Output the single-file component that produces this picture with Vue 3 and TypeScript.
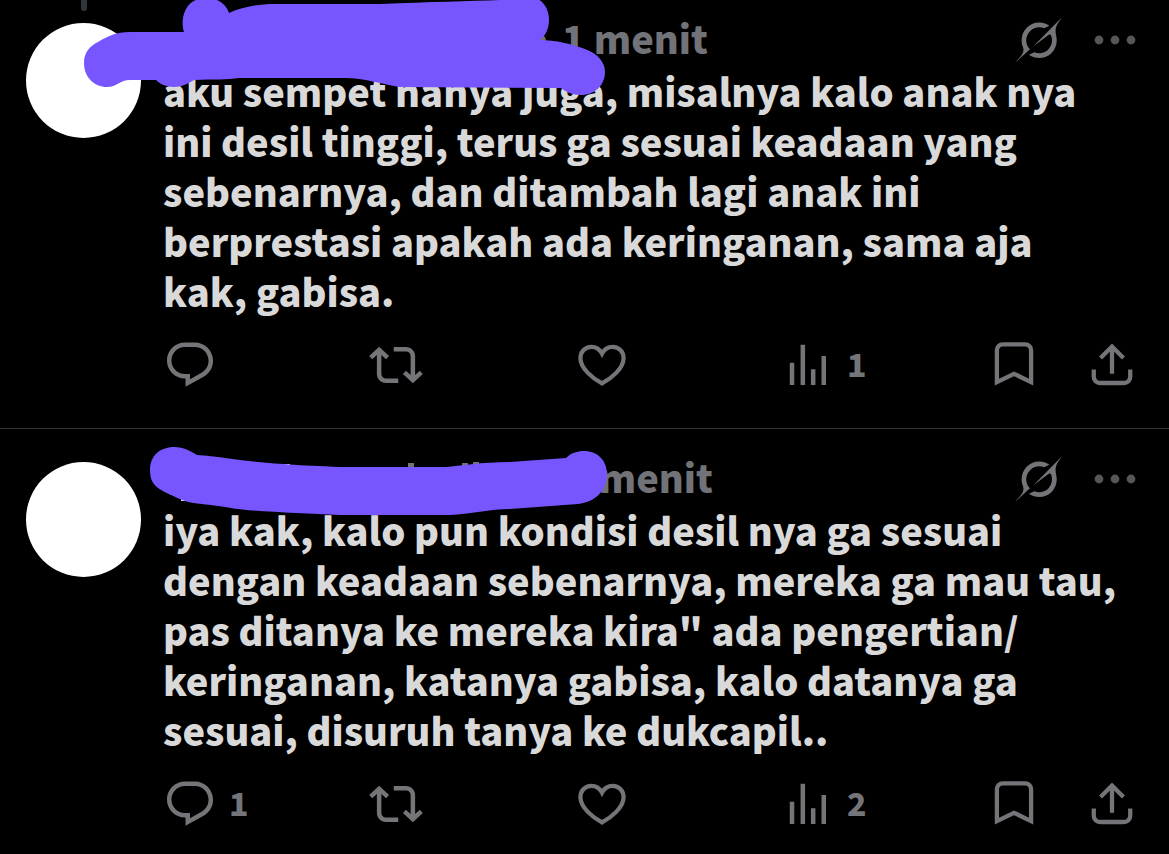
<script setup lang="ts">
interface Mark {
  x: number
  y: number
  w: number
  h: number
  tone: 'light' | 'dim'
}

interface Post {
  id: number
  time: string
  lines: string[]
  replies: number | null
  views: number
  threaded: boolean
  scribble: string
  marks: Mark[]
}

const posts: Post[] = [
  {
    id: 1,
    time: '· 1 menit',
    lines: [
      'aku sempet nanya juga, misalnya kalo anak nya',
      'ini desil tinggi, terus ga sesuai keadaan yang',
      'sebenarnya, dan ditambah lagi anak ini',
      'berprestasi apakah ada keringanan, sama aja',
      'kak, gabisa.',
    ],
    replies: null,
    views: 1,
    threaded: true,
    scribble:
      'M84 63C84 52 90 46 98 42C108 36 116 32 130 32L184 32C180 20 184-2 206-2C218-2 226 4 229 13C240 8 255 4 275 4L380 4C430 2 470 1 500 0L525-4C542-4 549 8 549 20C549 29 545 37 539 40C556 40 572 44 585 49C598 54 605 62 605 72C605 85 595 95 581 95C572 95 566 92 561 88L400 87C380 84 365 78 345 78L240 78C225 80 215 79 194 80C187 84 182 87 174 87C166 87 160 84 156 80L130 80C120 80 117 87 107 87C94 87 84 77 84 63z',
    marks: [],
  },
  {
    id: 2,
    time: '· 1 menit',
    lines: [
      'iya kak, kalo pun kondisi desil nya ga sesuai',
      'dengan keadaan sebenarnya, mereka ga mau tau,',
      'pas ditanya ke mereka kira" ada pengertian/',
      'keringanan, katanya gabisa, kalo datanya ga',
      'sesuai, disuruh tanya ke dukcapil..',
    ],
    replies: 1,
    views: 2,
    threaded: false,
    scribble:
      'M150 41C150 27 160 18 174 18C184 18 190 22 197 26C230 28 245 35 340 38L446 38C460 37 480 33 510 33L566 29C571 24 577 22 584 22C598 22 607 32 607 45C607 61 596 73 578 75L510 80C490 80 470 85 450 86L340 86C300 84 250 83 225 78C200 74 190 75 180 70C160 61 150 58 150 41z',
    marks: [
      { x: 284, y: 35, w: 6, h: 5, tone: 'light' },
      { x: 181, y: 68, w: 4, h: 4, tone: 'light' },
      { x: 408, y: 34, w: 6, h: 6, tone: 'dim' },
      { x: 462, y: 34, w: 6, h: 6, tone: 'dim' },
      { x: 473, y: 33, w: 6, h: 4, tone: 'dim' },
    ],
  },
]
</script>

<template>
  <main class="feed">
    <article v-for="post in posts" :key="post.id" class="post" :class="{ threaded: post.threaded }">
      <div class="side">
        <span v-if="post.threaded" class="thread"></span>
        <div class="avatar"></div>
      </div>
      <div class="content">
        <header class="head">
          <span class="name"></span>
          <time class="time">{{ post.time }}</time>
          <button class="plain" type="button" aria-label="Grok">
            <svg class="grok" viewBox="0 0 33 32">
              <path
                d="M12.745 20.54l10.97-8.19c.539-.4 1.307-.244 1.564.38 1.349 3.288.746 7.241-1.938 9.955-2.683 2.714-6.417 3.31-9.83 1.954l-3.728 1.745c5.347 3.697 11.84 2.782 15.898-1.324 3.219-3.255 4.216-7.692 3.284-11.693l.008.009c-1.351-5.878.332-8.227 3.782-13.031L33 0l-4.54 4.59v-.014L12.743 20.544m-2.263 1.987c-3.837-3.707-3.175-9.446.1-12.755 2.42-2.449 6.388-3.448 9.852-1.979l3.72-1.737c-.67-.49-1.53-1.017-2.515-1.387-4.455-1.854-9.789-.931-13.41 2.728-3.483 3.523-4.579 8.94-2.697 13.561 1.405 3.454-.899 5.898-3.22 8.364C1.49 30.2.666 31.074 0 32l10.478-9.466"
              />
            </svg>
          </button>
          <button class="plain more" type="button" aria-label="More">
            <svg class="dots" viewBox="0 0 42 10">
              <circle cx="5" cy="5" r="4.4" />
              <circle cx="21" cy="5" r="4.4" />
              <circle cx="37" cy="5" r="4.4" />
            </svg>
          </button>
        </header>
        <p class="text">
          <template v-for="(line, i) in post.lines" :key="i"><br v-if="i > 0" />{{ line }}</template>
        </p>
        <footer class="actions">
          <button class="plain action" type="button" aria-label="Reply">
            <svg class="icon solid" viewBox="0 0 24 24">
              <path
                d="M1.751 10c0-4.42 3.584-8 8.005-8h4.366c4.49 0 8.129 3.64 8.129 8.13 0 2.96-1.607 5.68-4.196 7.11l-8.054 4.46v-3.69h-.067c-4.49.1-8.183-3.51-8.183-8.01zm8.005-6c-3.317 0-6.005 2.69-6.005 6 0 3.37 2.77 6.08 6.138 6.01l.351-.01h1.761v2.3l5.087-2.81c1.951-1.08 3.163-3.13 3.163-5.36 0-3.39-2.744-6.13-6.129-6.13H9.756z"
              />
            </svg>
            <span v-if="post.replies !== null" class="count">{{ post.replies }}</span>
          </button>
          <button class="plain action" type="button" aria-label="Repost">
            <svg class="icon solid" viewBox="0 0 24 24">
              <path
                d="M4.5 3.88l4.432 4.14-1.364 1.46L5.5 7.55V16c0 1.1.896 2 2 2H13v2H7.5c-2.209 0-4-1.79-4-4V7.55L1.432 9.48.068 8.02 4.5 3.88zM16.5 6H11V4h5.5c2.209 0 4 1.79 4 4v8.45l2.068-1.93 1.364 1.46-4.432 4.14-4.432-4.14 1.364-1.46 2.068 1.93V8c0-1.1-.896-2-2-2z"
              />
            </svg>
          </button>
          <button class="plain action" type="button" aria-label="Like">
            <svg class="icon line" viewBox="0 0 24 24">
              <path
                d="M12 20.2C8 18 2.4 13.6 2.4 9C2.4 6 4.6 3.9 7.2 3.9C9.2 3.9 11 4.9 12 6.9C13 4.9 14.8 3.9 16.8 3.9C19.4 3.9 21.6 6 21.6 9C21.6 13.6 16 18 12 20.2z"
              />
            </svg>
          </button>
          <button class="plain action" type="button" aria-label="Views">
            <svg class="icon solid" viewBox="0 0 24 24">
              <path d="M3.9 11h2v9.9h-2zM8.7 3h2v17.9h-2zM13.3 13.9h2v7h-2zM18 8h2v12.9h-2z" />
            </svg>
            <span class="count">{{ post.views }}</span>
          </button>
          <div class="tools">
            <button class="plain" type="button" aria-label="Bookmark">
              <svg class="icon line" viewBox="0 0 24 24">
                <path d="M4.4 19.6V5.4a2.6 2.6 0 0 1 2.6-2.6h10a2.6 2.6 0 0 1 2.6 2.6v14.2L12 15.9z" />
              </svg>
            </button>
            <button class="plain" type="button" aria-label="Share">
              <svg class="icon line" viewBox="0 0 24 24">
                <path d="M12 15.9V3.6M6.9 8.9L12 3.8l5.1 5.1M3.9 14v3.2a2.8 2.8 0 0 0 2.8 2.8h10.6a2.8 2.8 0 0 0 2.8-2.8V14" />
              </svg>
            </button>
          </div>
        </footer>
      </div>
      <svg class="scribble" width="640" height="110" viewBox="0 0 640 110" aria-hidden="true">
        <rect
          v-for="(m, i) in post.marks"
          :key="i"
          :class="m.tone"
          :x="m.x"
          :y="m.y"
          :width="m.w"
          :height="m.h"
        />
        <path :d="post.scribble" />
      </svg>
    </article>
  </main>
</template>

<style>
html,
body {
  background: #000;
}
</style>

<style scoped>
.feed {
  overflow: hidden;
  background: #000;
  color: #d9d9d9;
  font-family: 'Noto Sans CJK JP', 'Noto Sans', sans-serif;
  font-weight: 900;
}
.post {
  position: relative;
  display: flex;
  gap: 22px;
  padding: 23px 30px 36px 26px;
  border-bottom: 1px solid #2f3336;
}
.post.threaded {
  padding-top: 13px;
}
.post:last-child {
  border-bottom: 0;
}
.side {
  flex: none;
  padding-top: 10px;
}
.threaded .side {
  padding-top: 0;
  margin-top: -13px;
}
.thread {
  display: block;
  width: 6px;
  height: 11px;
  margin: 0 auto 12px;
  border-radius: 0 0 3px 3px;
  background: #333639;
}
.avatar {
  width: 115px;
  height: 115px;
  border-radius: 50%;
  background: #fff;
}
.content {
  flex: 1;
  min-width: 0;
}
.head {
  display: flex;
  align-items: center;
  height: 53px;
  color: #717378;
}
.name {
  flex: none;
  width: 372px;
}
.threaded .name {
  width: 367px;
}
.time {
  flex: 1;
  padding-bottom: 3px;
  font-size: 38px;
  line-height: 50px;
  white-space: nowrap;
}
.plain {
  display: flex;
  align-items: center;
  padding: 0;
  border: 0;
  background: none;
  color: #747579;
  font: inherit;
}
.grok {
  width: 47px;
  height: 46px;
  fill: currentColor;
}
.more {
  margin: 0 3px 0 32px;
}
.dots {
  width: 42px;
  height: 10px;
  fill: #55565a;
}
.text {
  margin: 0;
  font-size: 38px;
  line-height: 50px;
  white-space: nowrap;
}
.actions {
  display: flex;
  align-items: center;
  margin-top: 22px;
}
.action {
  flex: 1;
  gap: 12px;
  height: 54px;
}
.count {
  padding-bottom: 4px;
  font-size: 32px;
  line-height: 50px;
}
.tools {
  display: flex;
  gap: 44px;
}
.icon {
  display: block;
  flex: none;
  width: 54px;
  height: 54px;
}
.solid {
  fill: currentColor;
}
.line {
  fill: none;
  stroke: currentColor;
  stroke-width: 1.9;
}
.scribble {
  position: absolute;
  top: 0;
  left: 0;
  fill: #7856ff;
  pointer-events: none;
}
.light {
  fill: #d9d9d9;
}
.dim {
  fill: #717378;
}
</style>
